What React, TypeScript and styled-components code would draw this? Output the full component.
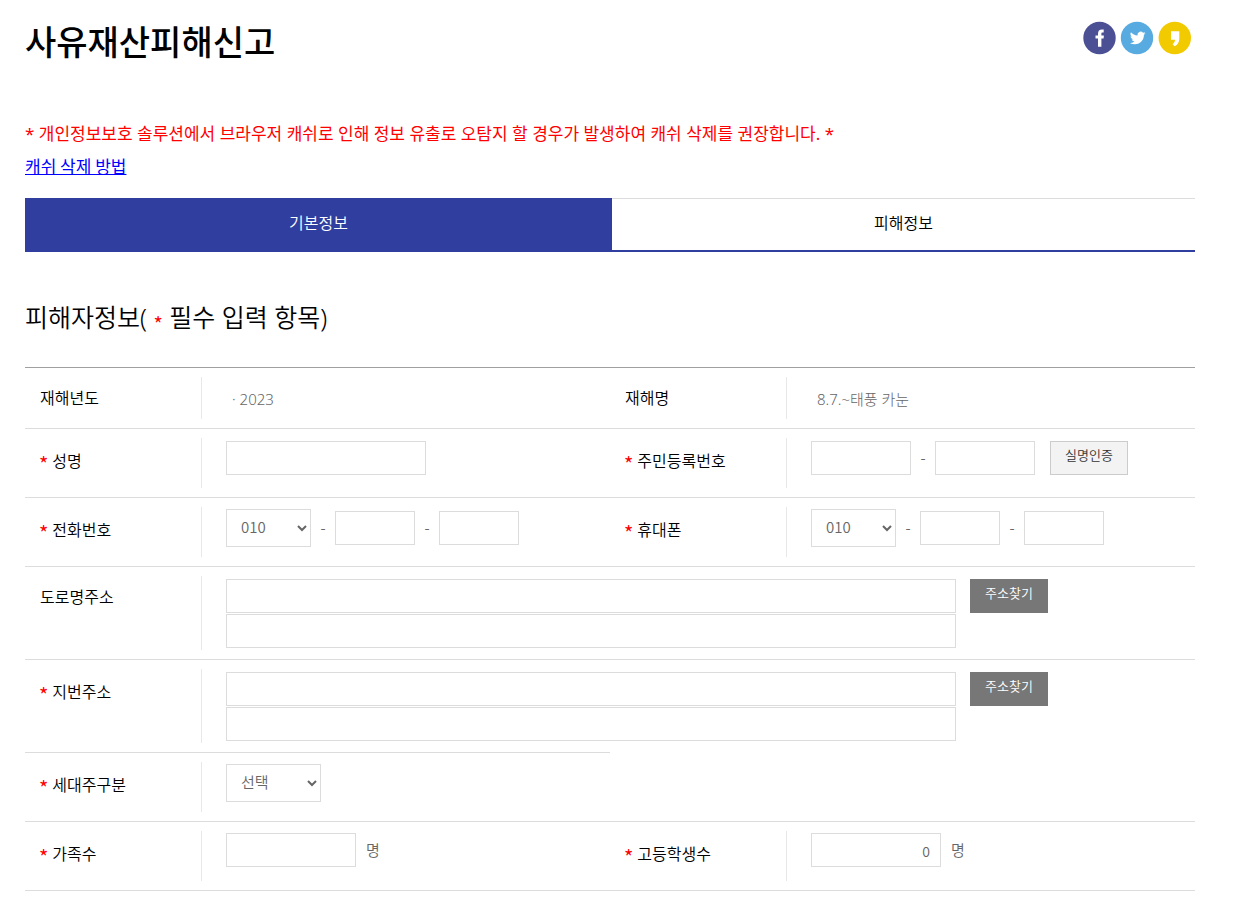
import React from "react";
import styled, { createGlobalStyle } from "styled-components";

const blue = "#303e9f";
const line = "#dcdcdc";

const GlobalStyle = createGlobalStyle`
  * { box-sizing: border-box; }
  body {
    margin: 0;
    background: #fff;
    color: #000;
    font-family: "Noto Sans CJK KR", "Noto Sans", sans-serif;
    font-size: 16px;
    font-weight: 350;
    line-height: 24px;
  }
  button, input, select { font: inherit; }
  h1, h2, p, dl, dt, dd { margin: 0; }
`;

const Page = styled.main`
  padding: 20px 55px 8px 25px;
`;

const Header = styled.header`
  display: flex;
  justify-content: space-between;
  align-items: flex-start;
  margin-bottom: 56px;
`;

const Title = styled.h1`
  font-size: 34px;
  font-weight: 500;
  line-height: 42px;
`;

const Share = styled.nav`
  display: flex;
  gap: 4px;
  padding: 1px 3px 0 0;
`;

const ShareLink = styled.a`
  display: block;
  height: 34px;
  svg { display: block; }
`;

const Notice = styled.p`
  color: #f00;
  font-size: 17px;
  font-family: "Noto Sans", "Noto Sans CJK KR", sans-serif;
  font-weight: 400;
  line-height: 32px;
`;

const HelpLink = styled.a`
  display: inline-block;
  color: #00f;
  font-size: 17px;
  font-weight: 400;
  line-height: 32px;
`;

const Tabs = styled.div`
  display: flex;
  margin: 16px 0 45px;
`;

const Tab = styled.button<{ $active?: boolean }>`
  flex: ${(p) => (p.$active ? "0 0 calc(50% + 2px)" : "1")};
  height: 54px;
  padding: 0 0 6px;
  border: 0;
  border-top: 1px solid ${(p) => (p.$active ? blue : line)};
  border-bottom: 2px solid ${blue};
  background: ${(p) => (p.$active ? blue : "#fff")};
  color: ${(p) => (p.$active ? "#fff" : "#000")};
`;

const SectionTitle = styled.h2`
  margin-bottom: 30px;
  font-family: "Noto Sans", "Noto Sans CJK KR", sans-serif;
  font-size: 25px;
  font-weight: 350;
  line-height: 40px;
`;

const Star = styled.span`
  color: #f00;
  font-family: "Noto Sans CJK KR", sans-serif;
  font-size: 20px;
  font-weight: 400;
  line-height: 20px;
  vertical-align: -5px;
`;

const Fields = styled.dl`
  display: grid;
  grid-template-columns: 1fr 1fr;
  border-top: 1px solid #a0a0a0;
`;

type FieldProps = { $wide?: boolean; $height: number; $open?: boolean; $ruled?: boolean };

const Field = styled.div<FieldProps>`
  display: grid;
  grid-template-columns: 177px 1fr;
  min-height: ${(p) => p.$height}px;
  grid-column: ${(p) => (p.$wide ? "1 / -1" : "auto")};
  border-top: ${(p) => (p.$ruled ? `1px solid ${line}` : "0")};
  border-bottom: ${(p) => (p.$open ? "0" : `1px solid ${line}`)};
`;

const Term = styled.dt<{ $required?: boolean }>`
  margin: 9px 0;
  padding: ${(p) => (p.$required ? 10 : 8)}px 0 0 ${(p) => (p.$required ? 14 : 15)}px;
  border-right: 1px solid #e8e8e8;
  ${Star} { margin-right: 4px; }
`;

const Value = styled.dd<{ $top?: number }>`
  display: flex;
  align-items: flex-start;
  padding: ${(p) => p.$top ?? 12}px 0 11px 24px;
  color: #666;
  font-size: 15px;
`;

const PlainText = styled.span`
  padding: 7px 0 0 6px;
  font-family: "Noto Sans", "Noto Sans CJK KR", sans-serif;
  font-weight: 300;
`;

const Line = styled.div`
  display: flex;
  align-items: center;
`;

const TextBox = styled.input<{ $w?: number }>`
  width: ${(p) => (p.$w ? `${p.$w}px` : "100%")};
  height: 34px;
  padding: 2px 10px 0;
  border: 1px solid ${line};
  background: #fff;
  color: #666;
  font-size: 14px;
`;

const NumberBox = styled(TextBox)`
  text-align: right;
`;

const Choice = styled.select<{ $w: number }>`
  width: ${(p) => p.$w}px;
  height: 38px;
  padding: 0 0 3px 10px;
  border: 1px solid ${line};
  border-radius: 0;
  background: #fff;
  color: #666;
  font-size: 15px;
`;

const Dash = styled.span`
  width: 24px;
  text-align: center;
`;

const Unit = styled.span`
  margin-left: 10px;
`;

const Stack = styled.div`
  display: flex;
  flex: 0 1 730px;
  flex-direction: column;
  gap: 1px;
`;

const SmallButton = styled.button<{ $dark?: boolean }>`
  flex: none;
  height: 34px;
  margin-left: ${(p) => (p.$dark ? 14 : 15)}px;
  padding: 0 14px 6px;
  border: 1px solid ${(p) => (p.$dark ? "#777" : "#ccc")};
  background: ${(p) => (p.$dark ? "#777" : "#f3f3f3")};
  color: ${(p) => (p.$dark ? "#fff" : "#333")};
  font-size: 13px;
  line-height: 24px;
`;

type LabelProps = { text: string; htmlFor?: string; required?: boolean };

function Label({ text, htmlFor, required }: LabelProps) {
  return (
    <Term $required={required}>
      {required && <Star>*</Star>}
      {htmlFor ? <label htmlFor={htmlFor}>{text}</label> : text}
    </Term>
  );
}

function Phone({ id, text }: { id: string; text: string }) {
  return (
    <Field $height={69}>
      <Label text={text} htmlFor={id} required />
      <Value $top={11}>
        <Line>
          <Choice id={id} $w={85} defaultValue="010">
            <option>010</option>
            <option>011</option>
          </Choice>
          <Dash>-</Dash>
          <TextBox $w={80} aria-label={`${text} 가운데 자리`} />
          <Dash>-</Dash>
          <TextBox $w={80} aria-label={`${text} 끝자리`} />
        </Line>
      </Value>
    </Field>
  );
}

type AddressProps = { id: string; text: string; required?: boolean; open?: boolean };

function Address({ id, text, required, open }: AddressProps) {
  return (
    <Field $height={open ? 92 : 93} $wide $open={open}>
      <Label text={text} htmlFor={id} required={required} />
      <Value>
        <Stack>
          <TextBox id={id} />
          <TextBox aria-label={`${text} 상세`} />
        </Stack>
        <SmallButton type="button" $dark>주소찾기</SmallButton>
      </Value>
    </Field>
  );
}

export default function App() {
  return (
    <>
      <GlobalStyle />
      <Page>
        <Header>
          <Title>사유재산피해신고</Title>
          <Share aria-label="공유">
            <ShareLink href="#facebook" aria-label="페이스북">
              <svg width="34" height="34" viewBox="0 0 34 34">
                <circle cx="17.500" cy="17" r="16.200" fill="#4b4f93" />
                <path fill="#fff" d="M16 25.800v-8.200h-2.500v-3.200h2.500v-1.600c0-2.900 1.300-4.400 4-4.400h1.700v3.200h-1.100c-1 0-1.200.5-1.200 1.300v1.500h2.500l-.3 3.200h-2.200v8.200z" />
              </svg>
            </ShareLink>
            <ShareLink href="#twitter" aria-label="트위터">
              <svg width="34" height="34" viewBox="0 0 34 34">
                <circle cx="17" cy="17" r="16.200" fill="#57abe1" />
                <path fill="#fff" transform="translate(9.900 9.200) scale(.65)" d="M23.95 4.57a10 10 0 0 1-2.82.77 4.96 4.96 0 0 0 2.16-2.72c-.95.55-2 .95-3.13 1.18a4.92 4.92 0 0 0-8.38 4.48C7.69 8.1 4.07 6.13 1.64 3.16a4.92 4.92 0 0 0 1.52 6.57 4.9 4.9 0 0 1-2.23-.61v.06a4.92 4.92 0 0 0 3.95 4.83 5 5 0 0 1-2.21.08 4.94 4.94 0 0 0 4.6 3.42A9.87 9.87 0 0 1 0 19.54a13.99 13.99 0 0 0 7.55 2.21c9.05 0 14-7.5 14-13.98 0-.21 0-.42-.02-.63a9.94 9.94 0 0 0 2.46-2.55z" />
              </svg>
            </ShareLink>
            <ShareLink href="#kakaostory" aria-label="카카오스토리">
              <svg width="34" height="34" viewBox="0 0 34 34">
                <circle cx="16.800" cy="17" r="16.200" fill="#f2ca00" />
                <path fill="#fff" d="M13 10.200h8.300v7c0 4-1.700 6.400-4.600 8.100l-2.100-2c1.500-1.300 2.400-2.700 2.500-4.600H13z" />
              </svg>
            </ShareLink>
          </Share>
        </Header>

        <Notice>* 개인정보보호 솔루션에서 브라우저 캐쉬로 인해 정보 유출로 오탐지 할 경우가 발생하여 캐쉬 삭제를 권장합니다. *</Notice>
        <HelpLink href="#cache">캐쉬 삭제 방법</HelpLink>

        <Tabs role="tablist">
          <Tab type="button" role="tab" aria-selected $active>기본정보</Tab>
          <Tab type="button" role="tab" aria-selected={false}>피해정보</Tab>
        </Tabs>

        <SectionTitle>피해자정보( <Star>*</Star> 필수 입력 항목)</SectionTitle>

        <form>
          <Fields>
            <Field $height={61}>
              <Label text="재해년도" />
              <Value><PlainText>· 2023</PlainText></Value>
            </Field>
            <Field $height={61}>
              <Label text="재해명" />
              <Value><PlainText>8.7.~태풍 카눈</PlainText></Value>
            </Field>

            <Field $height={69}>
              <Label text="성명" htmlFor="name" required />
              <Value><TextBox id="name" $w={200} /></Value>
            </Field>
            <Field $height={69}>
              <Label text="주민등록번호" htmlFor="rrn" required />
              <Value>
                <Line>
                  <TextBox id="rrn" $w={100} />
                  <Dash>-</Dash>
                  <TextBox $w={100} aria-label="주민등록번호 뒷자리" />
                  <SmallButton type="button">실명인증</SmallButton>
                </Line>
              </Value>
            </Field>

            <Phone id="phone" text="전화번호" />
            <Phone id="mobile" text="휴대폰" />

            <Address id="road" text="도로명주소" />
            <Address id="lot" text="지번주소" required open />

            <Field $height={70} $ruled>
              <Label text="세대주구분" htmlFor="household" required />
              <Value $top={11}>
                <Choice id="household" $w={95} defaultValue="선택">
                  <option>선택</option>
                </Choice>
              </Value>
            </Field>
            <Field $height={70} />

            <Field $height={69}>
              <Label text="가족수" htmlFor="family" required />
              <Value $top={11}>
                <Line><NumberBox id="family" $w={130} /><Unit>명</Unit></Line>
              </Value>
            </Field>
            <Field $height={69}>
              <Label text="고등학생수" htmlFor="students" required />
              <Value $top={11}>
                <Line><NumberBox id="students" $w={130} defaultValue="0" /><Unit>명</Unit></Line>
              </Value>
            </Field>
          </Fields>
        </form>
      </Page>
    </>
  );
}
